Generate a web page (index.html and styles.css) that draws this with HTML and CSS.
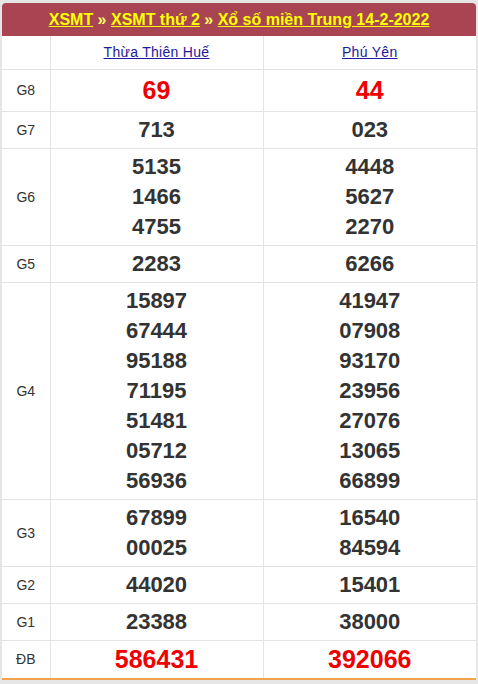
FILE: index.html
```html
<!DOCTYPE html>
<html lang="vi">
<head>
<meta charset="utf-8">
<title>XSMT 14-2-2022</title>
<link rel="stylesheet" href="styles.css">
</head>
<body>
<div class="box">
  <div class="title">
    <a href="#">XSMT</a> » <a href="#">XSMT thứ 2</a> » <a href="#">Xổ số miền Trung 14-2-2022</a>
  </div>
  <table class="kq">
    <colgroup><col class="c-lbl"><col class="c-num"><col class="c-num"></colgroup>
    <tr class="head">
      <td></td>
      <td><a href="#">Thừa Thiên Huế</a></td>
      <td><a href="#">Phú Yên</a></td>
    </tr>
    <tr class="big"><td class="lbl">G8</td><td class="red">69</td><td class="red">44</td></tr>
    <tr><td class="lbl">G7</td><td>713</td><td>023</td></tr>
    <tr><td class="lbl">G6</td><td>5135<br>1466<br>4755</td><td>4448<br>5627<br>2270</td></tr>
    <tr><td class="lbl">G5</td><td>2283</td><td>6266</td></tr>
    <tr><td class="lbl">G4</td><td>15897<br>67444<br>95188<br>71195<br>51481<br>05712<br>56936</td><td>41947<br>07908<br>93170<br>23956<br>27076<br>13065<br>66899</td></tr>
    <tr><td class="lbl">G3</td><td>67899<br>00025</td><td>16540<br>84594</td></tr>
    <tr><td class="lbl">G2</td><td>44020</td><td>15401</td></tr>
    <tr><td class="lbl">G1</td><td>23388</td><td>38000</td></tr>
    <tr class="big db"><td class="lbl">ĐB</td><td class="red">586431</td><td class="red">392066</td></tr>
  </table>
</div>
</body>
</html>
```
FILE: styles.css
```css
html, body { margin: 0; padding: 0; }
body {
  background: #e6e6e6;
  padding: 3px 2px 0 2px;
  font-family: "Liberation Sans", Arial, sans-serif;
  color: #333;
}
.box {
  background: #fff;
  border-radius: 4px 4px 0 0;
  border-bottom: 2px solid #f0a24e;
  overflow: hidden;
}
.title {
  background: #a94552;
  color: #ffff66;
  font-weight: bold;
  font-size: 16px;
  line-height: 33px;
  height: 33px;
  text-align: center;
}
.title a { color: #ffff00; text-decoration: underline; }
.kq {
  width: 100%;
  border-collapse: collapse;
  table-layout: fixed;
}
.c-lbl { width: 48px; }
.kq td {
  border: 1px solid #e3e3e3;
  text-align: center;
  vertical-align: middle;
  padding: 3px 0;
  font-size: 22px;
  font-weight: bold;
  line-height: 30px;
  color: #333;
}
.kq tr:first-child td { border-top: 0; }
.kq tr td:first-child { border-left: 0; }
.kq tr td:last-child { border-right: 0; }
.kq tr:last-child td { border-bottom: 0; }
.kq .head td {
  font-size: 14px;
  font-weight: normal;
  line-height: 26px;
  padding: 3px 0 4px;
  letter-spacing: 0.3px;
}
.kq .head a { color: #1c1a9a; text-decoration: underline; }
.kq td.lbl {
  font-size: 14px;
  font-weight: normal;
  color: #333;
}
.kq .big td { line-height: 35px; }
.kq .db td { line-height: 31px; }
.kq td.red { color: #ee0000; font-size: 25px; }
```
